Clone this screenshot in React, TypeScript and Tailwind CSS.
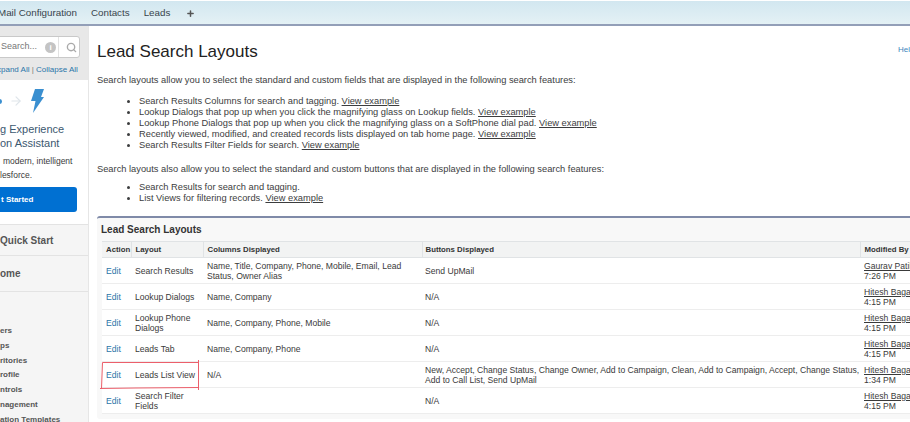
import { ArrowRight, Search, Plus } from 'lucide-react';

const rows = [
  { layout: 'Search Results', cols: 'Name, Title, Company, Phone, Mobile, Email, Lead Status, Owner Alias', btns: 'Send UpMail', by: 'Gaurav Patil', time: '7:26 PM' },
  { layout: 'Lookup Dialogs', cols: 'Name, Company', btns: 'N/A', by: 'Hitesh Baga', time: '4:15 PM' },
  { layout: 'Lookup Phone Dialogs', cols: 'Name, Company, Phone, Mobile', btns: 'N/A', by: 'Hitesh Baga', time: '4:15 PM' },
  { layout: 'Leads Tab', cols: 'Name, Company, Phone', btns: 'N/A', by: 'Hitesh Baga', time: '4:15 PM' },
  { layout: 'Leads List View', cols: 'N/A', btns: 'New, Accept, Change Status, Change Owner, Add to Campaign, Clean, Add to Campaign, Accept, Change Status, Add to Call List, Send UpMail', by: 'Hitesh Baga', time: '1:34 PM' },
  { layout: 'Search Filter Fields', cols: '', btns: 'N/A', by: 'Hitesh Baga', time: '4:15 PM' },
];

const bullets = [
  'Search Results Columns for search and tagging.',
  'Lookup Dialogs that pop up when you click the magnifying glass on Lookup fields.',
  'Lookup Phone Dialogs that pop up when you click the magnifying glass on a SoftPhone dial pad.',
  'Recently viewed, modified, and created records lists displayed on tab home page.',
  'Search Results Filter Fields for search.',
];

const sideItems = ['ers', 'ps', 'ritories', 'rofile', 'ntrols', 'nagement', 'ation Templates'];

function ViewExample() {
  return <span className="underline text-[#3c3d3e]">View example</span>;
}

export default function App() {
  return (
    <div className="w-[910px] h-[422px] overflow-hidden bg-white font-['Liberation_Sans',Arial,sans-serif] text-[#2f3032]">
      {/* Top tabs */}
      <div className="mt-px flex h-[25px] items-center gap-[14px] overflow-hidden border-b-2 border-[#939fb8] bg-gradient-to-b from-[#d2e7f0] to-[#e4f1f5] pt-px text-[9.8px] text-[#38444c]">
        <span className="-ml-[2px] shrink-0 whitespace-nowrap">Mail Configuration</span>
        <span>Contacts</span>
        <span>Leads</span>
        <Plus size={9} strokeWidth={4} className="ml-[2px] text-[#555]" />
      </div>

      <div className="flex h-[396px]">
        {/* Sidebar */}
        <div className="w-[89px] shrink-0 overflow-hidden border-r border-[#e6e6e6] bg-[#f5f5f5]">
          <div className="h-[54px] bg-[#e8e8e8] pt-[10px]">
            <div className="ml-[-10px] flex h-[22px] w-[90px] items-center rounded-[3px] border border-[#c9c9c9] bg-white pl-[10px] text-[9px] text-[#777]">
              <span className="w-[44px] shrink-0">Search...</span>
              <div className="h-[11px] w-[11px] shrink-0 rounded-full bg-[#c4c4c4] text-center text-[8px] font-bold leading-[11px] text-white">i</div>
              <div className="ml-[2px] h-full w-px shrink-0 bg-[#e2e2e2]" />
              <Search size={11} strokeWidth={3} className="ml-[7px] shrink-0 text-[#aaa]" />
            </div>
            <div className="mt-[6px] whitespace-nowrap text-[8px] text-[#2a75a8]">
              <span className="ml-[-3px]">xpand All</span> <span className="text-[#777]">|</span> Collapse All
            </div>
          </div>
          <div className="h-[144px] bg-white">
            <div className="flex h-[42px] items-center">
              <div className="ml-[-3px] h-[5px] w-[5px] rounded-full bg-[#3a8fd0]" />
              <ArrowRight size={14} className="ml-[7px] text-[#dfe5ea]" />
              <svg width="13" height="24" viewBox="0 0 13 24" className="ml-[8px] fill-[#3a8fd0]">
                <path d="M4 0h9l-3 8h3L2 24l2.5-12H0z" />
              </svg>
            </div>
            <div className="whitespace-nowrap text-[11px] leading-[14px] text-[#3c5870]">
              <div>g Experience</div>
              <div>on Assistant</div>
            </div>
            <div className="mt-[4px] whitespace-nowrap text-[8.5px] leading-[14px] text-[#3b3b3b]">
              <div className="pl-[3px]">modern, intelligent</div>
              <div>lesforce.</div>
            </div>
            <div className="ml-[-10px] mt-[5px] flex h-[25px] w-[87px] items-center rounded-[3px] bg-[#0070d2] pl-[11px] text-[8px] font-bold text-white">
              t Started
            </div>
          </div>
          <div className="flex h-[32px] items-center border-y border-[#e3e3e3] text-[10px] font-bold text-[#555]">
            Quick Start
          </div>
          <div className="flex h-[36px] items-center border-b border-[#e3e3e3] text-[10px] font-bold text-[#555]">
            ome
          </div>
          <div className="whitespace-nowrap pt-[32px] text-[8px] font-bold leading-[14.8px] text-[#555]">
            {sideItems.map((s) => (
              <div key={s}>{s}</div>
            ))}
          </div>
        </div>

        {/* Main */}
        <div className="min-w-0 flex-1 pl-2">
          <div className="flex items-start justify-between pt-[15px]">
            <h1 className="text-[17px] leading-[22px] text-[#222]">Lead Search Layouts</h1>
            <span className="pt-[3px] text-[8px] text-[#3f86bd]">Hel</span>
          </div>
          <p className="mt-[12px] text-[9.3px] leading-[11px] text-[#3c3d3e]">
            Search layouts allow you to select the standard and custom fields that are displayed in the following search features:
          </p>
          <ul className="mt-[10px] list-disc pl-[42px] text-[9.3px] leading-[11px] text-[#3c3d3e]">
            {bullets.map((t) => (
              <li key={t}>
                {t} <ViewExample />
              </li>
            ))}
          </ul>
          <p className="mt-[13px] text-[9.3px] leading-[11px] text-[#3c3d3e]">
            Search layouts also allow you to select the standard and custom buttons that are displayed in the following search features:
          </p>
          <ul className="mt-[7px] list-disc pl-[42px] text-[9.3px] leading-[11px] text-[#3c3d3e]">
            <li>Search Results for search and tagging.</li>
            <li>
              List Views for filtering records. <ViewExample />
            </li>
          </ul>

          {/* Related list */}
          <div className="relative mt-[12px] w-[830px] rounded-[3px] border-t-2 border-[#7f8aa8] bg-[#f8f8f8] pb-[5px]">
            <div className="flex h-[23px] items-center pl-[4px] text-[10px] font-bold text-[#333]">Lead Search Layouts</div>
            <table className="ml-[5px] w-[825px] table-fixed border-collapse bg-white text-[8.6px] leading-[10px] text-[#3a3a3a]">
              <thead>
                <tr className="h-[16px] border-y border-[#e0e3e5] bg-[#f2f3f3] text-left text-[7.8px] font-bold text-[#333]">
                  <th className="w-[29px] pl-[4px] font-bold">Action</th>
                  <th className="w-[72px] border-l border-[#e0e3e5] pl-[4px] font-bold">Layout</th>
                  <th className="w-[219px] border-l border-[#e0e3e5] pl-[4px] font-bold">Columns Displayed</th>
                  <th className="w-[438px] border-l border-[#e0e3e5] pl-[3px] font-bold">Buttons Displayed</th>
                  <th className="w-[67px] border-l border-[#e0e3e5] pl-[4px] font-bold">Modified By</th>
                </tr>
              </thead>
              <tbody>
                {rows.map((r) => (
                  <tr key={r.layout} className="h-[26px] border-b border-[#ededed]">
                    <td className="pl-[4px] text-[#2a75a8]">Edit</td>
                    <td className="pl-[4px]">{r.layout}</td>
                    <td className="pl-[4px]">{r.cols}</td>
                    <td className="pl-[3px]">{r.btns}</td>
                    <td className="whitespace-nowrap pl-[4px]">
                      <div className="underline">{r.by}</div>
                      <div>{r.time}</div>
                    </td>
                  </tr>
                ))}
              </tbody>
            </table>
            {/* red annotation round the Leads List View row */}
            <svg width="106" height="34" viewBox="0 0 106 34" className="absolute left-[2px] top-[141px] fill-none stroke-[#ec5f6b]">
              <path d="M3.5 3.5H99.5M99.5 1V31M3.5 3.5L2.5 29.5M1 29.5L36 29L99.5 28.5" />
            </svg>
          </div>
        </div>
      </div>
    </div>
  );
}
